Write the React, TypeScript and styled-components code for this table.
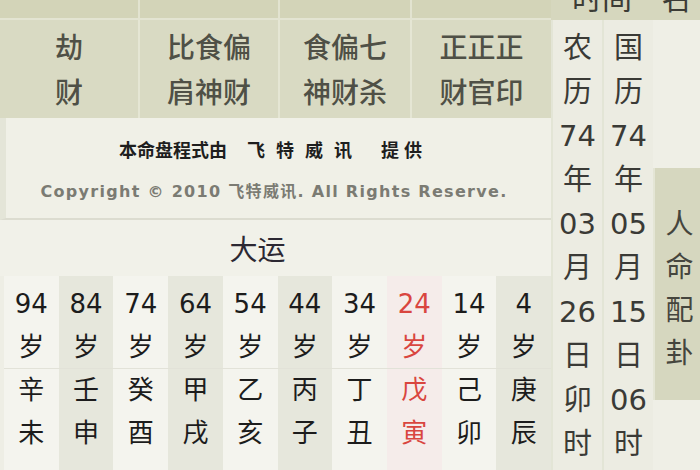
import React from "react";
import styled, { createGlobalStyle } from "styled-components";

const Global = createGlobalStyle`
  html, body { margin: 0; padding: 0; background: #efefe6; }
  body { font-family: "DejaVu Sans", "Noto Sans CJK SC", sans-serif; }
`;

const Page = styled.div`
  width: 700px;
  height: 470px;
  display: flex;
  overflow: hidden;
  background: #efefe6;
`;

const Left = styled.div`
  width: 551px;
  display: flex;
  flex-direction: column;
  flex: none;
`;

const cols = "138px 140px 132px 1fr";

const TopStrip = styled.div`
  height: 18px;
  display: grid;
  grid-template-columns: ${cols};
  background: #d3d4b8;
  border-bottom: 2px solid #e3e4d2;
`;

const StripCell = styled.div`
  border-left: 2px solid #e2e3d0;
  &:first-child { border-left: none; }
`;

const HeaderRow = styled.div`
  height: 98px;
  display: grid;
  grid-template-columns: ${cols};
`;

const HeaderCell = styled.div`
  background: #d9dac3;
  border-left: 2px solid #e5e6d4;
  &:first-child { border-left: none; }
  display: flex;
  align-items: center;
  justify-content: center;
  text-align: center;
  font-family: "Noto Sans CJK SC", sans-serif;
  font-size: 28px;
  line-height: 45px;
  font-weight: 500;
  color: #4f5046;
`;

const InfoPanel = styled.div`
  height: 102px;
  background: #f0f0e7;
  border-left: 6px solid #e4e5d8;
  border-bottom: 2px solid #dcdcd0;
  display: flex;
  flex-direction: column;
  align-items: center;
  padding-top: 19px;
  box-sizing: border-box;
`;

const Provider = styled.div`
  display: flex;
  font-family: "Noto Sans CJK SC", sans-serif;
  font-weight: 700;
  font-size: 18px;
  line-height: 24px;
  color: #1e1e1e;
  margin-right: 11px;
`;

const Seg = styled.span<{ $gap?: number; $ls?: number }>`
  margin-left: ${(p) => p.$gap ?? 0}px;
  letter-spacing: ${(p) => p.$ls ?? 0}px;
`;

const Copyright = styled.div`
  margin-top: 20px;
  font-family: "DejaVu Sans", "Noto Sans CJK SC", sans-serif;
  font-weight: 700;
  font-size: 16px;
  line-height: 22px;
  letter-spacing: 1.3px;
  color: #7b7b73;
  margin-right: 9px;
`;

const Title = styled.div`
  height: 56px;
  display: flex;
  align-items: center;
  justify-content: center;
  font-family: "Noto Sans CJK SC", sans-serif;
  font-size: 28px;
  color: #2c2833;
  padding-right: 36px;
  background: #f1f1e9;
`;

const Grid = styled.div`
  flex: 1;
  display: grid;
  grid-template-columns: repeat(10, 1fr);
  padding-left: 4px;
  background: #eeeee5;
`;

const Col = styled.div<{ $shade: boolean; $red: boolean }>`
  display: flex;
  flex-direction: column;
  align-items: center;
  padding-top: 7px;
  background: ${(p) => (p.$red ? "#f5ecea" : p.$shade ? "#e6e7dc" : "#f4f4ee")};
  color: ${(p) => (p.$red ? "#d9463f" : "#1c1c1c")};
`;

const Cell = styled.div<{ $line?: boolean }>`
  height: 43px;
  line-height: 43px;
  font-size: 26px;
  text-align: center;
  width: 100%;
  border-bottom: ${(p) => (p.$line ? "1px solid #e2e2d8" : "none")};
  box-sizing: border-box;
`;

const Right = styled.div`
  flex: 1;
  display: flex;
  flex-direction: column;
`;

const RightStrip = styled.div`
  height: 20px;
  flex: none;
  overflow: hidden;
  background: #d6d7be;
  display: flex;
  color: #3c3c36;
  font-family: "Noto Sans CJK SC", sans-serif;
  font-size: 30px;
  line-height: 30px;
`;

const StripText = styled.div<{ $w: number }>`
  width: ${(p) => p.$w}px;
  text-align: center;
  margin-top: -19px;
`;

const RightBody = styled.div`
  flex: 1;
  display: flex;
`;

const DateCol = styled.div`
  width: 51px;
  display: flex;
  flex-direction: column;
  align-items: center;
  padding-top: 6px;
  background: #ececE2;
  border-left: 2px solid #e3e5d6;
  box-sizing: border-box;
  color: #3a3a36;
`;

const DateCell = styled.div`
  height: 44px;
  line-height: 44px;
  font-size: 29px;
  text-align: center;
  white-space: nowrap;
`;

const GuaCol = styled.div`
  flex: 1;
  background: #efefe6;
`;

const GuaBlock = styled.div`
  margin-top: 148px;
  height: 232px;
  background: #d6d7bf;
  border-left: 2px solid #e4e5d5;
  display: flex;
  flex-direction: column;
  align-items: center;
  padding-top: 33px;
  padding-left: 4px;
  box-sizing: border-box;
  font-family: "Noto Sans CJK SC", sans-serif;
  font-size: 28px;
  line-height: 43px;
  color: #45453d;
`;

const headers = [
  ["劫", "财"],
  ["比食偏", "肩神财"],
  ["食偏七", "神财杀"],
  ["正正正", "财官印"],
];

const luck = [
  ["94", "辛", "未"],
  ["84", "壬", "申"],
  ["74", "癸", "酉"],
  ["64", "甲", "戌"],
  ["54", "乙", "亥"],
  ["44", "丙", "子"],
  ["34", "丁", "丑"],
  ["24", "戊", "寅"],
  ["14", "己", "卯"],
  ["4", "庚", "辰"],
];

const lunar = ["农", "历", "74", "年", "03", "月", "26", "日", "卯", "时", "瑞"];
const solar = ["国", "历", "74", "年", "05", "月", "15", "日", "06", "时", "30"];

export default function App() {
  return (
    <Page>
      <Global />
      <Left>
        <TopStrip>
          {headers.map((_, i) => (
            <StripCell key={i} />
          ))}
        </TopStrip>
        <HeaderRow>
          {headers.map((h, i) => (
            <HeaderCell key={i}>
              {h[0]}
              <br />
              {h[1]}
            </HeaderCell>
          ))}
        </HeaderRow>
        <InfoPanel>
          <Provider>
            <Seg>本命盘程式由</Seg>
            <Seg $gap={20} $ls={11}>飞特威讯</Seg>
            <Seg $gap={18} $ls={5}>提供</Seg>
          </Provider>
          <Copyright>Copyright © 2010 飞特威讯. All Rights Reserve.</Copyright>
        </InfoPanel>
        <Title>大运</Title>
        <Grid>
          {luck.map((l, i) => (
            <Col key={i} $shade={i % 2 === 1} $red={l[0] === "24"}>
              <Cell>{l[0]}</Cell>
              <Cell $line>岁</Cell>
              <Cell>{l[1]}</Cell>
              <Cell>{l[2]}</Cell>
            </Col>
          ))}
        </Grid>
      </Left>
      <Right>
        <RightStrip>
          <StripText $w={102}>时间</StripText>
          <StripText $w={47}>名</StripText>
        </RightStrip>
        <RightBody>
          <DateCol>
            {lunar.map((t, i) => (
              <DateCell key={i}>{t}</DateCell>
            ))}
          </DateCol>
          <DateCol>
            {solar.map((t, i) => (
              <DateCell key={i}>{t}</DateCell>
            ))}
          </DateCol>
          <GuaCol>
            <GuaBlock>
              <span>人</span>
              <span>命</span>
              <span>配</span>
              <span>卦</span>
            </GuaBlock>
          </GuaCol>
        </RightBody>
      </Right>
    </Page>
  );
}
